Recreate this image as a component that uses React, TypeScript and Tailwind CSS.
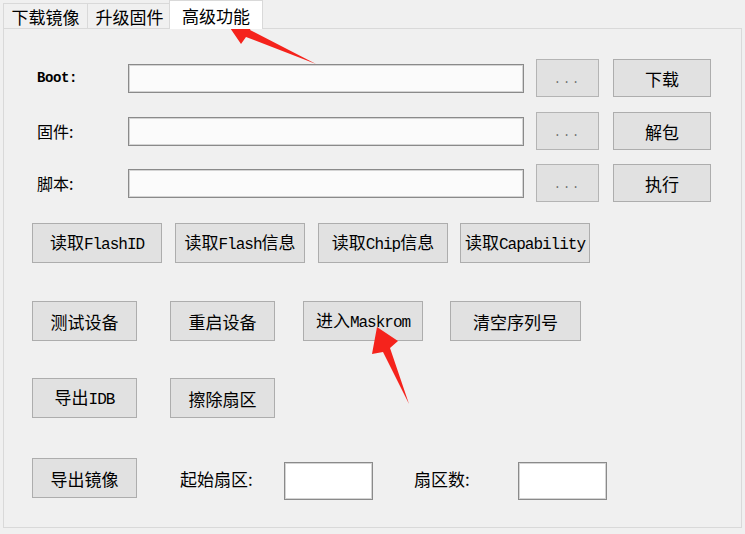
import { ReactNode } from 'react';

/** Splits a label into ASCII runs (SimSun-like mono) and CJK runs. */
function Txt({ s }: { s: string }) {
  const parts = s.match(/[\x00-\x7f]+|[^\x00-\x7f]+/g) ?? [];
  return (
    <>
      {parts.map((p, i) =>
        /^[\x00-\x7f]/.test(p) ? (
          <span
            key={i}
            className="font-['Liberation_Mono',monospace] text-[16px] tracking-[-1px]"
          >
            {p}
          </span>
        ) : (
          <span key={i}>{p}</span>
        )
      )}
    </>
  );
}

function Btn({ label, className = '' }: { label: string; className?: string }) {
  return (
    <button
      className={`h-[40px] shrink-0 flex items-center justify-center border border-[#adadad] bg-[#e1e1e1] text-[17px] leading-none text-black whitespace-nowrap ${className}`}
    >
      <span>
        <Txt s={label} />
      </span>
    </button>
  );
}

function Field({ className = '' }: { className?: string }) {
  return (
    <div
      className={`shrink-0 border border-[#8a8a8a] shadow-[inset_0_0_0_1px_#d4d4d4] ${className}`}
    />
  );
}

function Tab({ children, active = false }: { children: ReactNode; active?: boolean }) {
  return active ? (
    <div className="relative z-10 -mb-px -ml-[2px] h-[29px] w-[94px] flex items-center justify-center border border-b-0 border-[#d9d9d9] bg-white text-[17px] leading-none">
      {children}
    </div>
  ) : (
    <div className="h-[25px] w-[85px] flex items-center justify-center border border-b-0 border-[#d9d9d9] bg-[#f0f0f0] text-[17px] leading-none -mr-px">
      {children}
    </div>
  );
}

function FileRow({ label, action, mono = false }: { label: string; action: string; mono?: boolean }) {
  return (
    <div className="flex items-center h-[38px]">
      <div
        className={`w-[124px] pl-[33px] shrink-0 leading-none ${
          mono
            ? "font-['Liberation_Mono',monospace] text-[14px] font-bold tracking-[-0.4px]"
            : 'text-[16px]'
        }`}
      >
        {label}
      </div>
      <Field className="w-[396px] h-[29px] bg-[#fbfbfb]" />
      <button className="ml-[12px] w-[63px] h-[38px] shrink-0 border border-[#b4b4b4] bg-[#e1e1e1] text-[#707070] font-['Liberation_Mono',monospace] text-[12px] tracking-[2px] pt-[4px]">
        ...
      </button>
      <Btn label={action} className="ml-[14px] w-[98px] !h-[38px]" />
    </div>
  );
}

export default function App() {
  return (
    <div className="relative w-[745px] h-[534px] bg-[#f0f0f0] text-black font-['Noto_Sans_CJK_SC',sans-serif] overflow-hidden">
      {/* Tabs */}
      <div className="flex items-end h-[28px] pl-[3px]">
        <Tab>下载镜像</Tab>
        <Tab>升级固件</Tab>
        <Tab active>高级功能</Tab>
      </div>

      {/* Panel */}
      <div className="mx-[3px] h-[500px] border border-[#d9d9d9] bg-[#f0f0f0] pt-[30px]">
        <FileRow label="Boot:" action="下载" mono />
        <div className="mt-[15px]">
          <FileRow label="固件:" action="解包" />
        </div>
        <div className="mt-[14px]">
          <FileRow label="脚本:" action="执行" />
        </div>

        <div className="flex mt-[21px] pl-[28px] gap-[13px]">
          <Btn label="读取FlashID" className="w-[130px]" />
          <Btn label="读取Flash信息" className="w-[130px]" />
          <Btn label="读取Chip信息" className="w-[130px]" />
          <Btn label="读取Capability" className="w-[130px] -ml-px" />
        </div>

        <div className="flex mt-[38px] pl-[28px]">
          <Btn label="测试设备" className="w-[105px]" />
          <Btn label="重启设备" className="w-[105px] ml-[33px]" />
          <Btn label="进入Maskrom" className="w-[120px] ml-[28px]" />
          <Btn label="清空序列号" className="w-[131px] ml-[27px]" />
        </div>

        <div className="flex mt-[37px] pl-[28px]">
          <Btn label="导出IDB" className="w-[105px]" />
          <Btn label="擦除扇区" className="w-[105px] ml-[33px]" />
        </div>

        <div className="flex items-center mt-[38px] pl-[28px]">
          <Btn label="导出镜像" className="w-[105px]" />
          <span className="ml-[43px] w-[104px] text-[17px] leading-none">起始扇区:</span>
          <Field className="w-[89px] h-[38px] bg-white mt-[6px]" />
          <span className="ml-[41px] w-[104px] text-[17px] leading-none">扇区数:</span>
          <Field className="w-[89px] h-[38px] bg-white mt-[6px]" />
        </div>
      </div>

      {/* Annotation arrows */}
      <svg
        className="absolute inset-0 pointer-events-none"
        width="745"
        height="534"
        viewBox="0 0 745 534"
      >
        <polygon
          points="226,22 254,21 250,30 316,64 246,37 241,44"
          fill="#f5231c"
        />
        <polygon
          points="377,327 398,341 390,348 409,404 383,352 372,354"
          fill="#f5231c"
        />
      </svg>
    </div>
  );
}
